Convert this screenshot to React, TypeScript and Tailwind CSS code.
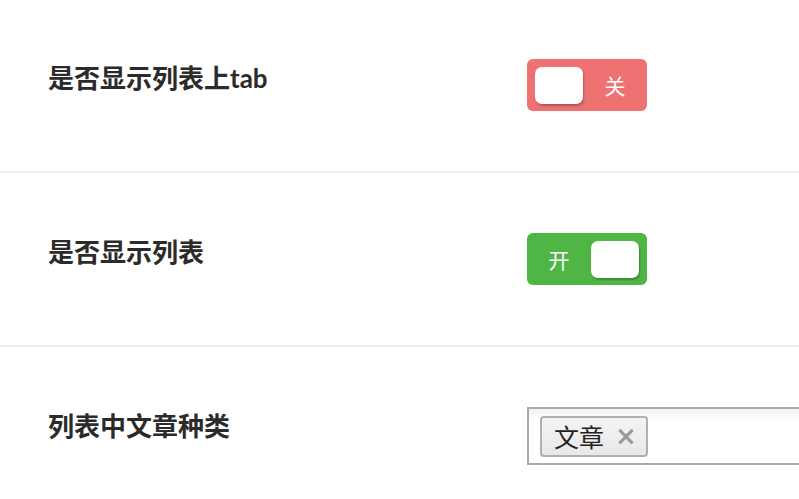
import React, { useState } from 'react';

const FONT = { fontFamily: 'Lato, "Noto Sans CJK SC", sans-serif' };

const Switch: React.FC<{ on: boolean; onToggle: () => void }> = ({ on, onToggle }) => (
  <button
    onClick={onToggle}
    className={`flex h-[52px] w-[120px] items-center rounded-[6px] px-[8px] ${
      on ? 'bg-[#4fb645]' : 'bg-[#ef7272]'
    }`}
    style={{ fontFamily: '"Noto Sans CJK SC", sans-serif' }}
  >
    {on ? (
      <>
        <span className="flex-1 text-center text-[21px] leading-none text-white pr-[8px]">开</span>
        <span className="h-[37px] w-[48px] rounded-[7px] bg-white shadow-[1px_2px_2px_rgba(0,0,0,0.25)]" />
      </>
    ) : (
      <>
        <span className="h-[37px] w-[48px] rounded-[7px] bg-white shadow-[1px_2px_2px_rgba(0,0,0,0.25)]" />
        <span className="flex-1 text-center text-[21px] leading-none text-white pl-[8px]">关</span>
      </>
    )}
  </button>
);

export default function App() {
  const [showTab, setShowTab] = useState(false);
  const [showList, setShowList] = useState(true);
  const [tags, setTags] = useState<string[]>(['文章']);

  return (
    <div className="h-[499px] w-[799px] overflow-hidden bg-white text-[#2b2b2b]" style={FONT}>
      <div className="flex h-[173px] border-b-2 border-[#eeeeee] pl-[48px] pt-[59px]">
        <div className="w-[479px] text-[26px] font-bold leading-[38px]">是否显示列表上tab</div>
        <Switch on={showTab} onToggle={() => setShowTab(!showTab)} />
      </div>

      <div className="flex h-[174px] border-b-2 border-[#eeeeee] pl-[48px] pt-[60px]">
        <div className="w-[479px] text-[26px] font-bold leading-[38px]">是否显示列表</div>
        <Switch on={showList} onToggle={() => setShowList(!showList)} />
      </div>

      <div className="flex pl-[48px] pt-[60px]">
        <div className="w-[479px] shrink-0 text-[26px] font-bold leading-[38px]">列表中文章种类</div>
        <div className="flex h-[58px] w-[320px] shrink-0 items-center border-2 border-[#aaaaaa] bg-gradient-to-b from-[#f2f2f2] to-white to-[20%] pl-[11px]">
          {tags.map((t) => (
            <span
              key={t}
              className="flex h-[41px] items-center gap-[11px] rounded-[4px] border-2 border-[#b0b0b0] bg-gradient-to-b from-[#f4f4f4] to-[#e8e8e8] pl-[12px] pr-[9px] text-[25px] leading-none text-[#222]"
              style={{ fontFamily: '"Noto Sans CJK SC", sans-serif' }}
            >
              {t}
              <button
                onClick={() => setTags(tags.filter((x) => x !== t))}
                className="text-[26px] font-bold leading-none text-[#9a9a9a]"
                style={{ fontFamily: '"DejaVu Sans", sans-serif' }}
              >
                ×
              </button>
            </span>
          ))}
        </div>
      </div>
    </div>
  );
}
